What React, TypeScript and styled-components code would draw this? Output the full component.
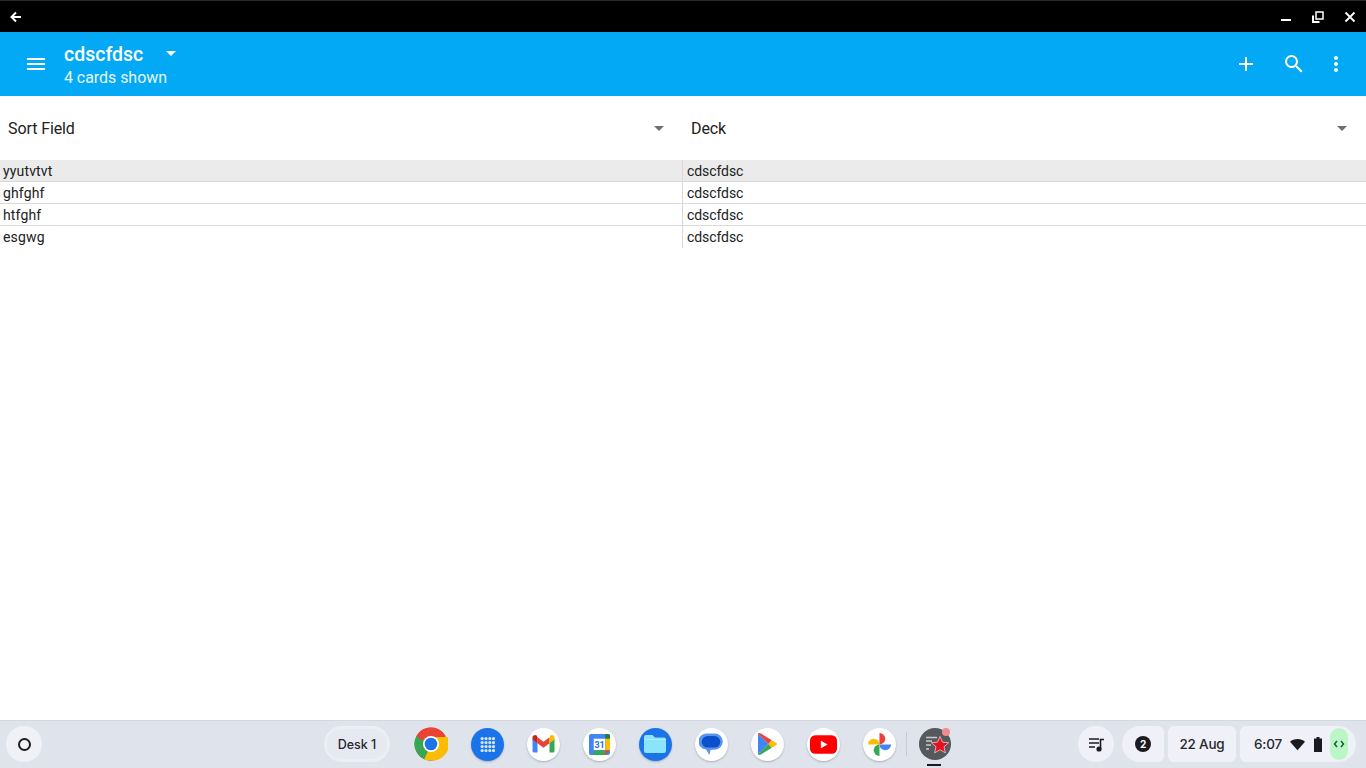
import React from 'react';
import styled, { createGlobalStyle } from 'styled-components';

const Global = createGlobalStyle`
  html, body { margin: 0; padding: 0; height: 100%; background: #fff; overflow: hidden; }
  body { font-family: Roboto, "Liberation Sans", sans-serif; }
`;

const Page = styled.div`
  width: 1366px;
  height: 768px;
  display: flex;
  flex-direction: column;
`;

const TitleBar = styled.header`
  height: 32px;
  flex: none;
  box-sizing: border-box;
  background: #000;
  border-top: 1px solid #2a2a2a;
  display: flex;
  align-items: center;
  padding: 0 0 0 8px;
  color: #fff;
`;

const WinControls = styled.div`
  margin-left: auto;
  display: flex;
`;

const WinButton = styled.div`
  width: 32px;
  height: 30px;
  display: flex;
  align-items: center;
  justify-content: center;
`;

const AppBar = styled.div`
  height: 64px;
  flex: none;
  background: #03a9f4;
  display: flex;
  align-items: center;
  color: #fff;
  padding: 0 12px 0 24px;
`;

const TitleBlock = styled.div`
  margin-left: 16px;
  padding-top: 2px;
  display: flex;
  flex-direction: column;
`;

const TitleRow = styled.div`
  display: flex;
  align-items: center;
  height: 26px;
`;

const Title = styled.div`
  font-size: 19.5px;
  font-weight: 500;
  line-height: 26px;
`;

const Subtitle = styled.div`
  font-size: 16px;
  line-height: 20px;
  letter-spacing: -0.05px;
  color: #e6f6fe;
`;

const TitleCaret = styled.span`
  margin-left: 23px;
  width: 0;
  height: 0;
  border-left: 5px solid transparent;
  border-right: 5px solid transparent;
  border-top: 5px solid #fff;
  margin-top: -3px;
`;

const Actions = styled.div`
  margin-left: auto;
  display: flex;
`;

const ActionBtn = styled.div<{ $narrow?: boolean }>`
  width: ${(p) => (p.$narrow ? 36 : 48)}px;
  height: 48px;
  display: flex;
  align-items: center;
  justify-content: center;
`;

const Spinners = styled.div`
  height: 64px;
  flex: none;
  display: flex;
`;

const Spinner = styled.div<{ $w: number }>`
  width: ${(p) => p.$w}px;
  box-sizing: border-box;
  padding: 0 8px;
  display: flex;
  align-items: center;
  justify-content: space-between;
  font-size: 16px;
  letter-spacing: -0.1px;
  color: #212121;
`;

const Caret = styled.span`
  width: 0;
  height: 0;
  border-left: 5px solid transparent;
  border-right: 5px solid transparent;
  border-top: 5px solid #6f6f6f;
  margin-right: 11px;
`;

const Table = styled.div`
  flex: 1;
  font-size: 14px;
  color: #212121;
`;

const Row = styled.div<{ $sel?: boolean; $last?: boolean }>`
  height: 22px;
  box-sizing: border-box;
  display: flex;
  background: ${(p) => (p.$sel ? '#ebebeb' : 'transparent')};
  border-bottom: ${(p) => (p.$last ? 'none' : '1px solid #d9d9d9')};
`;

const Cell = styled.div<{ $w?: number }>`
  ${(p) => (p.$w ? `width: ${p.$w}px;` : 'flex: 1;')}
  box-sizing: border-box;
  padding-left: ${(p) => (p.$w ? 3 : 4)}px;
  line-height: 22px;
  letter-spacing: ${(p) => (p.$w ? '0.15px' : '-0.08px')};
  ${(p) => (p.$w ? 'border-right: 1px solid #d9d9d9;' : '')}
`;

const Shelf = styled.footer`
  height: 48px;
  flex: none;
  box-sizing: border-box;
  background: #dfe3ec;
  box-shadow: inset 0 1px 0 #d3d7e0;
  display: flex;
  align-items: center;
  padding: 0 10px 0 6px;
`;

const Launcher = styled.div`
  width: 36px;
  height: 36px;
  border-radius: 50%;
  background: #eff1f7;
  display: flex;
  align-items: center;
  justify-content: center;
`;

const LauncherRing = styled.div`
  width: 9px;
  height: 9px;
  border: 2px solid #1b1b1f;
  border-radius: 50%;
`;

const Dock = styled.div`
  margin-left: 282px;
  display: flex;
  align-items: center;
`;

const DeskChip = styled.div`
  width: 66px;
  height: 36px;
  box-sizing: border-box;
  border-radius: 18px;
  border: 3px solid #eceef5;
  background: #e6e9f1;
  font-size: 12.5px;
  font-weight: 500;
  color: #26282c;
  display: flex;
  align-items: center;
  justify-content: center;
  margin-right: 13px;
  font-family: Inter, Roboto, sans-serif;
`;

const DockSlot = styled.div<{ $w?: number }>`
  width: ${(p) => p.$w ?? 56}px;
  height: 48px;
  display: flex;
  align-items: center;
  justify-content: center;
  position: relative;
`;

const AppCircle = styled.div<{ $bg?: string }>`
  width: 33px;
  height: 33px;
  border-radius: 50%;
  background: ${(p) => p.$bg ?? '#fff'};
  display: flex;
  align-items: center;
  justify-content: center;
  box-shadow: 0 1px 2px rgba(60, 64, 67, 0.3);
`;

const DockDivider = styled.div`
  width: 1px;
  height: 24px;
  margin-left: -1px;
  background: #c6cad2;
`;

const RunDot = styled.div`
  position: absolute;
  bottom: 2px;
  left: 20px;
  width: 14px;
  height: 2px;
  background: #1b1b1f;
`;

const BadgeDot = styled.div`
  position: absolute;
  top: 8px;
  right: 12px;
  width: 8px;
  height: 8px;
  border-radius: 50%;
  background: #f28b92;
`;

const Tray = styled.div`
  margin-left: auto;
  display: flex;
  align-items: center;
  gap: 4px;
`;

const MusicPod = styled.div`
  width: 36px;
  height: 36px;
  margin-right: 4px;
  border-radius: 50%;
  background: #f0f1f8;
  display: flex;
  align-items: center;
  justify-content: center;
`;

const TrayPod = styled.div<{ $w: number; $radius: string }>`
  width: ${(p) => p.$w}px;
  height: 36px;
  border-radius: ${(p) => p.$radius};
  background: #f0f1f8;
  display: flex;
  align-items: center;
  justify-content: center;
  font-size: 13.5px;
  font-weight: 500;
  color: #26282c;
  font-family: Inter, Roboto, sans-serif;
  letter-spacing: -0.2px;
`;

const NotifBadge = styled.div`
  width: 16px;
  height: 16px;
  border-radius: 50%;
  background: #1b1b1f;
  color: #fff;
  font-size: 10px;
  font-weight: 700;
  display: flex;
  align-items: center;
  justify-content: center;
`;

const StatusPod = styled.div`
  width: 116px;
  height: 36px;
  box-sizing: border-box;
  border-radius: 6px 18px 18px 6px;
  background: #f0f1f8;
  display: flex;
  align-items: center;
  padding-left: 14px;
  font-size: 13.5px;
  font-weight: 500;
  color: #26282c;
  font-family: Inter, Roboto, sans-serif;
  letter-spacing: -0.2px;
`;

const Clock = styled.span`
  width: 33px;
`;

const StatusIcon = styled.svg<{ $ml: number }>`
  margin-left: ${(p) => p.$ml}px;
  flex: none;
`;

const DevPill = styled.div`
  width: 18px;
  height: 32px;
  margin-left: 8px;
  border-radius: 9px;
  background: #bdf6c6;
  display: flex;
  align-items: center;
  justify-content: center;
`;

const rows = ['yyutvtvt', 'ghfghf', 'htfghf', 'esgwg'];

const Chrome = () => (
  <svg width="34" height="34" viewBox="0 0 34 34">
    <circle cx="17" cy="17" r="16.5" fill="#ea4335" />
    <path d="M17 17 L2.7 25.2 A16.5 16.5 0 0 0 17 33.5 L25.2 31.3 Z" fill="#34a853" />
    <path d="M2.7 25.2 A16.5 16.5 0 0 1 2.7 8.8 L17 17 Z" fill="#34a853" />
    <path d="M17 17 L17 10 L33.5 10 A16.5 16.5 0 0 1 18 33.5 L10 33 Z" fill="#fbbc04" />
    <path d="M17 0.5 A16.5 16.5 0 0 1 31.3 9 L17 9 L7 13 L2.7 8.8 A16.5 16.5 0 0 1 17 0.5 Z" fill="#ea4335" />
    <circle cx="17" cy="17" r="8" fill="#fff" />
    <circle cx="17" cy="17" r="6.3" fill="#1a73e8" />
  </svg>
);

const Launch = () => (
  <svg width="15" height="15" viewBox="0 0 14 14" fill="#d2e3fc">
    {[1.5, 5.2, 8.9, 12.6].flatMap((y) =>
      [2, 5.6, 9.2, 12.6].map((x) => <circle key={`${x}-${y}`} cx={x} cy={y} r="1.5" />)
    )}
  </svg>
);

const Gmail = () => (
  <svg width="25" height="20" viewBox="0 0 24 20">
    <path d="M1 18.5V5l5 3.6v9.9H2.5A1.5 1.5 0 0 1 1 17Z" fill="#4285f4" />
    <path d="M23 18.5V5l-5 3.6v9.9h3.500A1.500 1.500 0 0 0 23 17Z" fill="#34a853" />
    <path d="M6 9.200V3.300L12 7.800l6-4.500v5.900l-6 4.500Z" fill="#ea4335" />
    <path d="M1 3.500C1 1.200 3.700.2 5.200 1.500L6 3.300v5.900L1 5.500Z" fill="#c5221f" />
    <path d="M18 3.300l.8-1.800C20.300.2 23 1.200 23 3.500v2L18 9.200Z" fill="#fbbc04" />
  </svg>
);

const Calendar = () => (
  <svg width="21" height="21" viewBox="0 0 20 20">
    <rect x="0" y="0" width="20" height="20" rx="2" fill="#4285f4" />
    <rect x="4.500" y="4.500" width="11" height="11" fill="#fff" />
    <path d="M15.500 0H18a2 2 0 0 1 2 2v2.500h-4.500Z" fill="#188038" />
    <rect x="15.500" y="4.500" width="4.500" height="11" fill="#fbbc04" />
    <path d="M4.500 15.500h11V20h-11Z" fill="#34a853" />
    <path d="M15.500 15.500H20L15.500 20Z" fill="#ea4335" />
    <text x="10" y="13.600" fontSize="8.500" fontWeight="700" fontFamily="Roboto, sans-serif" textAnchor="middle" fill="#1a73e8">31</text>
  </svg>
);

const Folder = () => (
  <svg width="22" height="18" viewBox="0 0 22 18">
    <path d="M2 0h6.500l2.500 2.500h9a2 2 0 0 1 2 2V16a2 2 0 0 1-2 2H2a2 2 0 0 1-2-2V2a2 2 0 0 1 2-2Z" fill="#8ae4fb" />
    <path d="M0 4.500h22" stroke="#b5eefc" strokeWidth="0.800" />
  </svg>
);

const Messages = () => (
  <svg width="24" height="24" viewBox="0 0 24 24">
    <path d="M8 1.500h8a8 8 0 0 1 1 15.900l-5.500.6-1 5-3.500-5.500A8 8 0 0 1 8 1.500Z" fill="#5b93ee" />
    <path d="M8.500 4h7a5.800 5.800 0 0 1 0 11.600h-7A5.800 5.800 0 0 1 8.500 4Z" fill="#0b50c8" />
  </svg>
);

const Play = () => (
  <svg width="22" height="24" viewBox="0 0 22 24">
    <path d="M2 1.500 12.500 12 2 22.500Z" fill="#4285f4" />
    <path d="M2 1.500C3 .9 4 1 5 1.600L15.800 8.300 12.500 12Z" fill="#ea4335" />
    <path d="M2 22.500C3 23.100 4 23 5 22.400L15.800 15.700 12.500 12Z" fill="#34a853" />
    <path d="M15.800 8.300 20 10.700c1.300.7 1.300 1.900 0 2.600l-4.200 2.400L12.500 12Z" fill="#fbbc04" />
  </svg>
);

const YouTube = () => (
  <svg width="27" height="19" viewBox="0 0 26 18">
    <rect width="26" height="18" rx="5" fill="#f00" />
    <path d="M10.500 5.500 17 9l-6.500 3.500Z" fill="#fff" />
  </svg>
);

const Photos = () => (
  <svg width="25" height="25" viewBox="0 0 26 26">
    <path d="M1 13A6 6 0 0 1 13 13Z" fill="#fbbc04" />
    <path d="M13 1A6 6 0 0 1 13 13Z" fill="#ea4335" />
    <path d="M25 13A6 6 0 0 1 13 13Z" fill="#4285f4" />
    <path d="M13 25A6 6 0 0 1 13 13Z" fill="#34a853" />
  </svg>
);

const Anki = () => (
  <svg width="32" height="32" viewBox="0 0 32 32">
    <circle cx="16" cy="16" r="16" fill="#55585c" />
    <path d="M7 9.500h11M7 13h6M7 17h5M7 21h3" stroke="#c8cacc" strokeWidth="1.300" />
    <path d="M21 8.500l2.500 5.700 6.200.5-4.700 4.100 1.400 6.100-5.400-3.200-5.400 3.200 1.400-6.100-4.700-4.100 6.200-.5Z" fill="#e8101e" stroke="#f3c9cc" strokeWidth="0.800" />
  </svg>
);

export default function App() {
  return (
    <Page>
      <Global />
      <TitleBar>
        <svg width="16" height="16" viewBox="0 0 16 16" fill="none" stroke="#fff" strokeWidth="2">
          <path d="M13 8H4M8 3.500 3.500 8 8 12.500" />
        </svg>
        <WinControls>
          <WinButton>
            <svg width="12" height="12" viewBox="0 0 12 12"><rect x="1" y="8" width="10" height="2" fill="#fff" /></svg>
          </WinButton>
          <WinButton>
            <svg width="12" height="12" viewBox="0 0 12 12" fill="none" stroke="#fff" strokeWidth="1.500">
              <rect x="4" y="1" width="7" height="7" />
              <path d="M1 4.500V11h6.500" strokeWidth="2" />
            </svg>
          </WinButton>
          <WinButton>
            <svg width="12" height="12" viewBox="0 0 12 12" stroke="#fff" strokeWidth="1.800"><path d="M1.500 1.500l9 9M10.500 1.500l-9 9" /></svg>
          </WinButton>
        </WinControls>
      </TitleBar>
      <AppBar>
        <svg width="24" height="24" viewBox="0 0 24 24" fill="#fff"><path d="M3 18h18v-2H3v2zm0-5h18v-2H3v2zm0-7v2h18V6H3z" /></svg>
        <TitleBlock>
          <TitleRow>
            <Title>cdscfdsc</Title>
            <TitleCaret />
          </TitleRow>
          <Subtitle>4 cards shown</Subtitle>
        </TitleBlock>
        <Actions>
          <ActionBtn>
            <svg width="24" height="24" viewBox="0 0 24 24" fill="#fff"><path d="M19 13h-6v6h-2v-6H5v-2h6V5h2v6h6v2z" /></svg>
          </ActionBtn>
          <ActionBtn>
            <svg width="24" height="24" viewBox="0 0 24 24" fill="#fff"><path d="M15.500 14h-.79l-.28-.27A6.471 6.471 0 0 0 16 9.500 6.500 6.500 0 1 0 9.500 16c1.610 0 3.090-.59 4.230-1.570l.27.28v.79l5 4.990L20.490 19l-4.990-5zm-6 0C7.010 14 5 11.990 5 9.500S7.010 5 9.500 5 14 7.010 14 9.500 11.990 14 9.500 14z" /></svg>
          </ActionBtn>
          <ActionBtn $narrow>
            <svg width="24" height="24" viewBox="0 0 24 24" fill="#fff"><path d="M12 8c1.100 0 2-.9 2-2s-.9-2-2-2-2 .9-2 2 .9 2 2 2zm0 2c-1.100 0-2 .9-2 2s.9 2 2 2 2-.9 2-2-.9-2-2-2zm0 6c-1.100 0-2 .9-2 2s.9 2 2 2 2-.9 2-2-.9-2-2-2z" /></svg>
          </ActionBtn>
        </Actions>
      </AppBar>
      <Spinners>
        <Spinner $w={683}><span>Sort Field</span><Caret /></Spinner>
        <Spinner $w={683}><span>Deck</span><Caret /></Spinner>
      </Spinners>
      <Table>
        {rows.map((r, i) => (
          <Row key={r} $sel={i === 0} $last={i === rows.length - 1}>
            <Cell $w={683}>{r}</Cell>
            <Cell>cdscfdsc</Cell>
          </Row>
        ))}
      </Table>
      <Shelf>
        <Launcher><LauncherRing /></Launcher>
        <Dock>
          <DeskChip>Desk 1</DeskChip>
          <DockSlot><Chrome /></DockSlot>
          <DockSlot><AppCircle $bg="#1a73e8"><Launch /></AppCircle></DockSlot>
          <DockSlot><AppCircle><Gmail /></AppCircle></DockSlot>
          <DockSlot><AppCircle><Calendar /></AppCircle></DockSlot>
          <DockSlot><AppCircle $bg="#1a73e8"><Folder /></AppCircle></DockSlot>
          <DockSlot><AppCircle><Messages /></AppCircle></DockSlot>
          <DockSlot><AppCircle><Play /></AppCircle></DockSlot>
          <DockSlot><AppCircle><YouTube /></AppCircle></DockSlot>
          <DockSlot><AppCircle><Photos /></AppCircle></DockSlot>
          <DockDivider />
          <DockSlot $w={55}>
            <Anki />
            <BadgeDot />
            <RunDot />
          </DockSlot>
        </Dock>
        <Tray>
          <MusicPod>
            <svg width="18" height="18" viewBox="0 0 18 18" fill="none" stroke="#1b1b1f" strokeWidth="1.600">
              <path d="M2 4h10M2 8h10M2 12h6" />
              <path d="M13.500 14V4.500H17" />
              <circle cx="12" cy="14" r="1.800" fill="#1b1b1f" />
            </svg>
          </MusicPod>
          <TrayPod $w={42} $radius="18px 6px 6px 18px"><NotifBadge>2</NotifBadge></TrayPod>
          <TrayPod $w={68} $radius="6px">22 Aug</TrayPod>
          <StatusPod>
            <Clock>6:07</Clock>
            <StatusIcon $ml={3} width="15" height="15" viewBox="0 0 16 16"><path d="M0 5C2 3 5 2 8 2s6 1 8 3L8 14Z" fill="#1b1b1f" /></StatusIcon>
            <StatusIcon $ml={9} width="8" height="15" viewBox="0 0 8 15"><path d="M2.500 0h3v1.500H8V15H0V1.500h2.500Z" fill="#1b1b1f" /></StatusIcon>
            <DevPill>
              <svg width="12" height="12" viewBox="0 0 12 12" fill="none" stroke="#0d652d" strokeWidth="1.500"><path d="M4 3 1.500 6 4 9M8 3l2.500 3L8 9" /></svg>
            </DevPill>
          </StatusPod>
        </Tray>
      </Shelf>
    </Page>
  );
}
